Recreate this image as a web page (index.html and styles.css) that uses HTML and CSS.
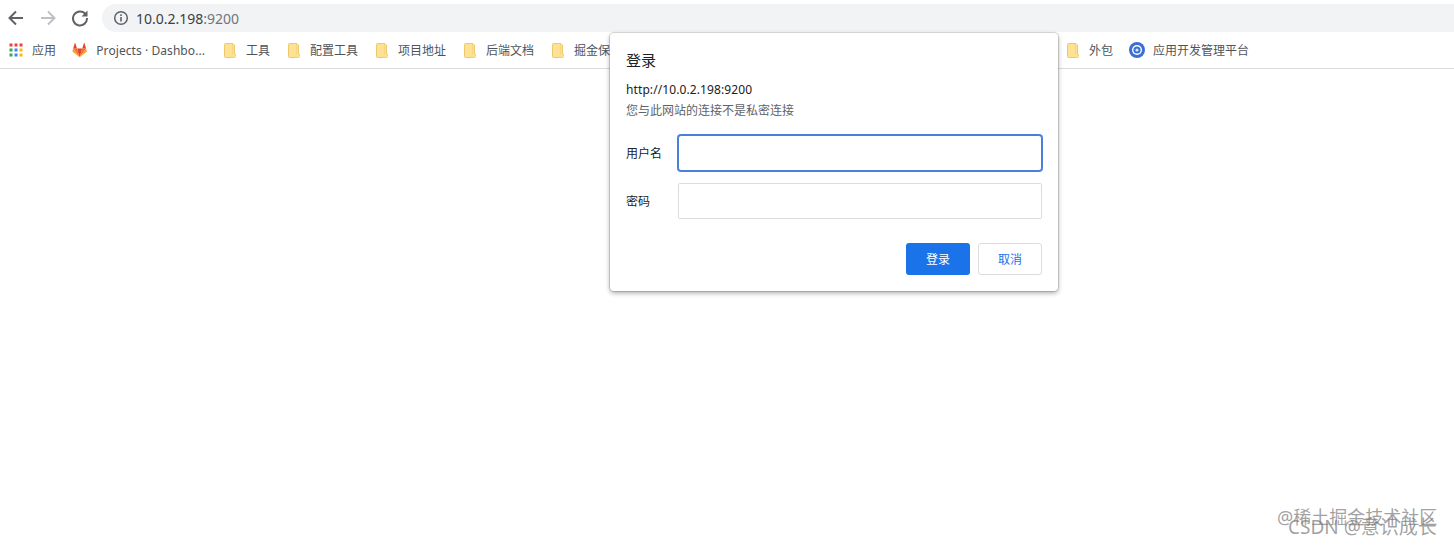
FILE: index.html
```html
<!DOCTYPE html>
<html lang="zh">
<head>
<meta charset="utf-8">
<title>登录</title>
<link rel="stylesheet" href="styles.css">
</head>
<body>
<header class="chrome">
  <div class="toolbar">
    <button class="nav" aria-label="后退"><svg width="18" height="18" viewBox="0 0 18 18"><path d="M16 9H3M9 2.5 2.5 9 9 15.500" fill="none" stroke="#5f6368" stroke-width="2"/></svg></button>
    <button class="nav" aria-label="前进"><svg width="18" height="18" viewBox="0 0 18 18"><path d="M2 9h13M9 2.500 15.500 9 9 15.500" fill="none" stroke="#bdc1c6" stroke-width="2"/></svg></button>
    <button class="nav" aria-label="刷新"><svg width="18" height="18" viewBox="0 0 18 18"><path d="M14.600 5.200A7 7 0 1 0 16 9" fill="none" stroke="#5f6368" stroke-width="2"/><path d="M16.500 1.500v6h-6z" fill="#5f6368"/></svg></button>
    <div class="omnibox">
      <svg class="info" width="16" height="16" viewBox="0 0 16 16"><circle cx="8" cy="8" r="6.300" fill="none" stroke="#5f6368" stroke-width="1.500"/><path d="M7.200 7h1.600v4.500H7.200zM7.200 4.300h1.600v1.600H7.200z" fill="#5f6368"/></svg>
      <span class="host">10.0.2.198<span class="port">:9200</span></span>
    </div>
  </div>
  <nav class="bookmarks">
    <a class="bm bm-apps"><svg class="apps" width="14" height="14" viewBox="0 0 14 14"><g><rect width="3" height="3" x="0.500" y="0.500" fill="#ea4335"/><rect width="3" height="3" x="5.500" y="0.500" fill="#ea4335"/><rect width="3" height="3" x="10.500" y="0.500" fill="#ea4335"/><rect width="3" height="3" x="0.500" y="5.500" fill="#34a853"/><rect width="3" height="3" x="5.500" y="5.500" fill="#4285f4"/><rect width="3" height="3" x="10.500" y="5.500" fill="#fbbc05"/><rect width="3" height="3" x="0.500" y="10.500" fill="#34a853"/><rect width="3" height="3" x="5.500" y="10.500" fill="#4285f4"/><rect width="3" height="3" x="10.500" y="10.500" fill="#fbbc05"/></g></svg>应用</a>
    <a class="bm bm-lab"><svg class="fox" width="16" height="16" viewBox="0 0 16 16"><path d="M8 15.500 5.200 6.500h5.600z" fill="#e24329"/><path d="M8 15.500 5.200 6.500H1.200z" fill="#fc6d26"/><path d="M8 15.500l2.800-9h4z" fill="#fc6d26"/><path d="M1.200 6.500.4 9.200c-.1.300 0 .5.200.7L8 15.500z" fill="#fca326"/><path d="M14.800 6.500l.8 2.700c.1.300 0 .5-.2.700L8 15.500z" fill="#fca326"/><path d="M1.200 6.500h4L3.500.8c-.1-.3-.5-.3-.6 0z" fill="#e24329"/><path d="M14.800 6.500h-4L12.500.8c.1-.3.5-.3.600 0z" fill="#e24329"/></svg><span class="lab-text">Projects · Dashbo...</span></a>
    <a class="bm"><svg class="folder" width="12" height="15" viewBox="0 0 12 15"><path d="M.5 1.500a1 1 0 0 1 1-1h7.500v11h2.500v2a1 1 0 0 1-1 1h-9a1 1 0 0 1-1-1z" fill="#fde293" stroke="#ecc96d"/><path d="M9 .5a1 1 0 0 1 1 1v10h1.500v3H9z" fill="#fde293" stroke="none"/><path d="M10.500 1.500v10" stroke="#ecc96d" fill="none"/></svg>工具</a>
    <a class="bm"><svg class="folder" width="12" height="15" viewBox="0 0 12 15"><path d="M.5 1.500a1 1 0 0 1 1-1h7.500v11h2.500v2a1 1 0 0 1-1 1h-9a1 1 0 0 1-1-1z" fill="#fde293" stroke="#ecc96d"/><path d="M9 .5a1 1 0 0 1 1 1v10h1.500v3H9z" fill="#fde293" stroke="none"/><path d="M10.500 1.500v10" stroke="#ecc96d" fill="none"/></svg>配置工具</a>
    <a class="bm"><svg class="folder" width="12" height="15" viewBox="0 0 12 15"><path d="M.5 1.500a1 1 0 0 1 1-1h7.500v11h2.500v2a1 1 0 0 1-1 1h-9a1 1 0 0 1-1-1z" fill="#fde293" stroke="#ecc96d"/><path d="M9 .5a1 1 0 0 1 1 1v10h1.500v3H9z" fill="#fde293" stroke="none"/><path d="M10.500 1.500v10" stroke="#ecc96d" fill="none"/></svg>项目地址</a>
    <a class="bm"><svg class="folder" width="12" height="15" viewBox="0 0 12 15"><path d="M.5 1.500a1 1 0 0 1 1-1h7.500v11h2.500v2a1 1 0 0 1-1 1h-9a1 1 0 0 1-1-1z" fill="#fde293" stroke="#ecc96d"/><path d="M9 .5a1 1 0 0 1 1 1v10h1.500v3H9z" fill="#fde293" stroke="none"/><path d="M10.500 1.500v10" stroke="#ecc96d" fill="none"/></svg>后端文档</a>
    <a class="bm"><svg class="folder" width="12" height="15" viewBox="0 0 12 15"><path d="M.5 1.500a1 1 0 0 1 1-1h7.500v11h2.500v2a1 1 0 0 1-1 1h-9a1 1 0 0 1-1-1z" fill="#fde293" stroke="#ecc96d"/><path d="M9 .5a1 1 0 0 1 1 1v10h1.500v3H9z" fill="#fde293" stroke="none"/><path d="M10.500 1.500v10" stroke="#ecc96d" fill="none"/></svg>掘金保存</a>
    <a class="bm bm-right"><svg class="folder" width="12" height="15" viewBox="0 0 12 15"><path d="M.5 1.500a1 1 0 0 1 1-1h7.500v11h2.500v2a1 1 0 0 1-1 1h-9a1 1 0 0 1-1-1z" fill="#fde293" stroke="#ecc96d"/><path d="M9 .5a1 1 0 0 1 1 1v10h1.500v3H9z" fill="#fde293" stroke="none"/><path d="M10.500 1.500v10" stroke="#ecc96d" fill="none"/></svg>外包</a>
    <a class="bm bm-plat"><svg class="target" width="16" height="16" viewBox="0 0 16 16"><circle cx="8" cy="8" r="8" fill="#3b6fd4"/><circle cx="8" cy="8" r="5" fill="#fff"/><circle cx="8" cy="8" r="3.600" fill="#3b6fd4"/><circle cx="8" cy="8" r="1.600" fill="#dbe6fa"/></svg>应用开发管理平台</a>
  </nav>
</header>

<section class="dialog">
  <h1 class="title">登录</h1>
  <p class="origin">http://10.0.2.198:9200</p>
  <p class="note">您与此网站的连接不是私密连接</p>
  <div class="field">
    <label class="label" for="user">用户名</label>
    <div class="input input-focus" id="user"></div>
  </div>
  <div class="field">
    <label class="label" for="pass">密码</label>
    <div class="input" id="pass"></div>
  </div>
  <div class="actions">
    <button class="btn btn-primary">登录</button>
    <button class="btn btn-ghost">取消</button>
  </div>
</section>

<div class="mark mark-a">@稀土掘金技术社区</div>
<div class="mark mark-b">CSDN @意识成长</div>
</body>
</html>
```
FILE: styles.css
```css
* { box-sizing: border-box; }
html, body { margin: 0; height: 100%; background: #fff; overflow: hidden; }
body { font-family: "Noto Sans", "Noto Sans CJK SC", sans-serif; color: #3c4043; }

.chrome { height: 69px; border-bottom: 1px solid #dadce0; background: #fff; }

.toolbar { height: 35px; display: flex; align-items: center; padding: 1px 0 0 7px; }
.nav { width: 18px; height: 18px; padding: 0; margin-right: 14px; border: 0; background: none; display: flex; }
.omnibox { flex: 1; height: 28px; margin-left: -1px; padding-left: 11px; display: flex; align-items: center; gap: 7px; background: #f1f3f4; border-radius: 14px 0 0 14px; }
.host { font-size: 14px; color: #3c4043; }
.port { color: #70757a; }

.bookmarks { height: 30px; display: flex; align-items: center; padding-left: 9px; font-size: 12px; }
.bm { display: flex; align-items: center; color: #505458; margin-right: 18px; white-space: nowrap; }
.apps { margin-right: 9px; }
.bm-apps { margin-right: 16px; }
.fox { margin-right: 8px; }
.target { margin-right: 8px; }
.lab-text { margin-left: 1px; letter-spacing: .07px; }
.bm-lab { width: 133px; margin-right: 19px; }
.bm-right { margin-left: 427px; margin-right: 16px; }
.bm-plat { margin-right: 0; }
.folder { margin-right: 10px; }

.dialog { position: absolute; left: 610px; top: 33px; width: 448px; height: 258px; padding: 15px 16px 0; background: #fff; border-radius: 4px; box-shadow: 0 0 0 1px rgba(0,0,0,.12), 0 2px 5px rgba(0,0,0,.35); }
.title { margin: 0; font-size: 15px; line-height: 24px; font-weight: 400; color: #202124; }
.origin { margin: 9px 0 0; font-size: 12px; letter-spacing: .1px; line-height: 18px; color: #202124; }
.note { margin: 3px 0 0; font-size: 12px; line-height: 18px; color: #5f6368; }
.field { display: flex; align-items: center; margin-top: 12px; }
.field:first-of-type { margin-top: 15px; }
.label { width: 52px; font-size: 12px; color: #202124; }
.input { width: 364px; height: 36px; border: 1px solid #dadce0; border-radius: 2px; background: #fff; }
.input-focus { border-color: #4a7fdc; box-shadow: 0 0 0 1px #4a7fdc; border-radius: 3px; }
.actions { display: flex; justify-content: flex-end; gap: 8px; margin-top: 24px; }
.btn { width: 64px; height: 32px; padding: 0; border-radius: 3px; font-family: inherit; font-size: 12px; }
.btn-primary { border: 0; background: #1a73e8; color: #fff; }
.btn-ghost { border: 1px solid #dadce0; background: #fff; color: #1a73e8; }

.mark { position: absolute; white-space: nowrap; color: rgba(120,120,120,.7); font-size: 18px; line-height: 24px; }
.mark-a { left: 1277px; top: 505px; }
.mark-b { left: 1288px; top: 515px; font-size: 19px; }
```
